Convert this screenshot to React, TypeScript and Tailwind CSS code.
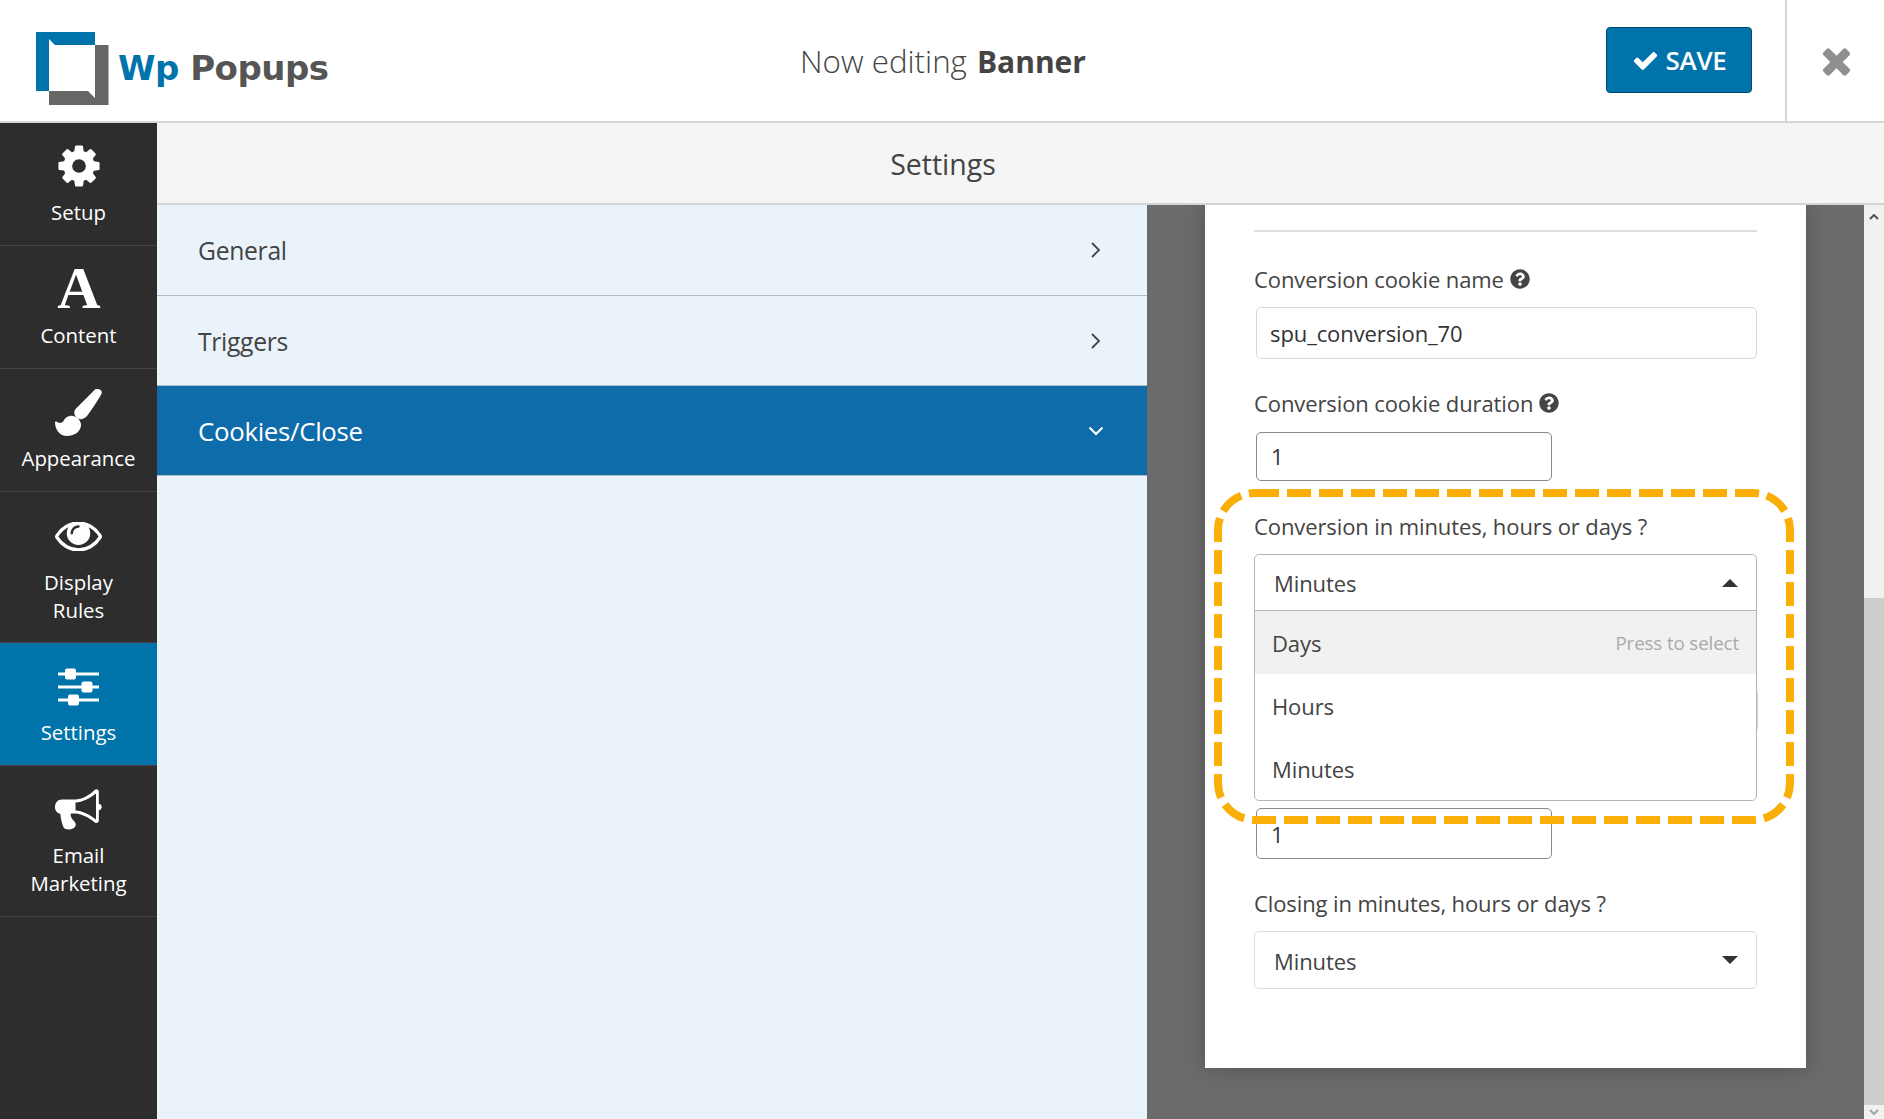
import React from "react";
import { FaQuestionCircle } from "react-icons/fa";

const Gear = () => (
  <svg width="48" height="48" viewBox="0 0 1792 1792" fill="#fff" className="-translate-y-[1px]">
    <path d="M1152 896q0-106-75-181t-181-75-181 75-75 181 75 181 181 75 181-75 75-181zm512-109v222q0 12-8 23t-20 13l-185 28q-19 54-39 91 35 50 107 138 10 12 10 25t-9 23q-27 37-99 108t-94 71q-12 0-26-9l-138-108q-44 23-91 38-16 136-29 186-7 28-36 28h-222q-14 0-24.500-8.500t-11.500-21.500l-28-184q-49-16-90-37l-141 107q-10 9-25 9-14 0-25-11-126-114-165-168-7-10-7-23 0-12 8-23 15-21 51-66.500t54-70.500q-27-50-41-99l-183-27q-13-2-21-12.500t-8-23.500v-222q0-12 8-23t19-13l186-28q14-46 39-92-40-57-107-138-10-12-10-24 0-10 9-23 26-36 98.500-107.500t94.500-71.500q13 0 26 10l138 107q44-23 91-38 16-136 29-186 7-28 36-28h222q14 0 24.500 8.500t11.500 21.500l28 184q49 16 90 37l142-107q9-9 24-9 13 0 25 10 129 119 165 170 7 8 7 22 0 12-8 23-15 21-51 66.500t-54 70.500q26 50 41 98l183 28q13 2 21 12.500t8 23.500z" />
  </svg>
);

const Eye = () => (
  <svg width="47" height="29" viewBox="0 416 1792 1088" fill="#fff">
    <path d="M1664 960q-152-236-381-353 61 104 61 225 0 185-131.500 316.500t-316.500 131.500-316.500-131.500-131.500-316.500q0-121 61-225-229 117-381 353 133 205 333.500 326.500t434.500 121.500 434.500-121.500 333.500-326.500zm-720-384q0-20-14-34t-34-14q-125 0-214.500 89.500t-89.500 214.500q0 20 14 34t34 14 34-14 14-34q0-86 61-147t147-61q20 0 34-14t14-34zm848 384q0 34-20 69-140 230-376.500 368.500t-499.500 138.500-499.500-139-376.500-368q-20-35-20-69t20-69q140-229 376.500-368t499.500-139 499.500 139 376.500 368q20 35 20 69z" />
  </svg>
);

const Check = () => (
  <svg width="27" height="27" viewBox="0 0 1792 1792" fill="#fff">
    <path d="M1671 566q0 40-28 68l-724 724-136 136q-28 28-68 28t-68-28l-136-136-362-362q-28-28-28-68t28-68l136-136q28-28 68-28t68 28l294 295 656-657q28-28 68-28t68 28l136 136q28 28 28 68z" />
  </svg>
);

const Times = () => (
  <svg width="41" height="41" viewBox="0 0 1792 1792" fill="#8f8f8f" className="translate-x-[1px]">
    <path d="M1490 1322q0 40-28 68l-136 136q-28 28-68 28t-68-28l-294-294-294 294q-28 28-68 28t-68-28l-136-136q-28-28-28-68t28-68l294-294-294-294q-28-28-28-68t28-68l136-136q28-28 68-28t68 28l294 294 294-294q28-28 68-28t68 28l136 136q28 28 28 68t-28 68l-294 294 294 294q28 28 28 68z" />
  </svg>
);

const LetterA = () => (
  <svg width="48" height="41" viewBox="0 0 48 41" fill="#fff" className="overflow-visible -translate-y-[1px]">
    <text
      x="24"
      y="40"
      textAnchor="middle"
      fontSize="60"
      fontWeight="700"
      fontFamily="'Liberation Serif', serif"
    >
      A
    </text>
  </svg>
);

const Brush = () => (
  <svg width="47" height="47" viewBox="0 0 47 47" fill="#fff">
    <path d="M40 .5C42-.5 47 0 46.800 4 46.500 6 34 25 32 27c-3 3.500-8 4.500-11 1-2.500-3-2-6 0-8.500z" />
    <path d="M15 27c5-1 10 3 11 8 .5 7-6 12-14 12C5 47 0 41 0 33c1-1 2 0 3 .5 2 1 4 .5 5.500-1.500C10 29 12 27.500 15 27z" />
  </svg>
);

const Sliders = () => (
  <svg width="41" height="38" viewBox="0 0 41 38" fill="#fff">
    <rect x="0" y="4.500" width="41" height="3" />
    <rect x="0" y="17.500" width="41" height="3" />
    <rect x="0" y="30.500" width="41" height="3" />
    <rect x="7" y="0.500" width="11" height="11" rx="2" />
    <rect x="23.500" y="13.500" width="11" height="11" rx="2" />
    <rect x="10" y="26.500" width="11" height="11" rx="2" />
  </svg>
);

const Megaphone = () => (
  <svg width="47" height="41" viewBox="0 0 47 41" fill="#fff">
    <path
      fillRule="evenodd"
      d="M41.500.200c1.200 0 2.300 1 2.300 2.300v12.300c1.700.3 2.900 1.600 2.900 3.200s-1.200 3-2.900 3.300v10.500c0 1.200-1 2.200-2.300 2.200-.6 0-1.100-.2-1.600-.6C34 29 28 25 20 24.500l-3.500-.1-.5.1c-.6 1-.3 2.300 0 3.200.5 1.500 1.700 3 3 4.300 1.500 1.500 2.200 3.500 1.500 5-.7 1.800-3 3.300-6 3.500-2.700.2-5.200-.5-6-2.200-1.500-3.300-2.700-8-3.200-13.500C2 24.300 0 21.500 0 18c0-4 2.800-7.500 7-7.500h13c7 0 14-4 20-9.700.4-.4 1-.6 1.500-.6zM20.500 13.500v8c7 .3 14 4 20.500 9V4.500c-6.500 5-13.500 8.700-20.500 9z"
    />
  </svg>
);

const Logo = () => (
  <svg width="74" height="75" viewBox="36 31 74 75" className="shrink-0">
    <path fill="#0073aa" d="M36 32h59v13H55l-6-6v52H36z" />
    <path fill="#666" d="M95 45h13.500v60H49V91h39l7 7z" />
  </svg>
);

const Chevron = ({ open = false }: { open?: boolean }) =>
  open ? (
    <svg width="16" height="16" viewBox="0 0 16 16" fill="none" stroke="#fff" strokeWidth="2">
      <path d="M1.500 4.500l6.500 6.500 6.500-6.500" />
    </svg>
  ) : (
    <svg width="16" height="16" viewBox="0 0 16 16" fill="none" stroke="#444" strokeWidth="1.800">
      <path d="M4 1l7 7-7 7" />
    </svg>
  );

const Caret = ({ up = false }: { up?: boolean }) => (
  <svg width="16" height="8" viewBox="0 0 16 8" fill="#333" className="shrink-0">
    {up ? <path d="M8 0l8 8H0z" /> : <path d="M0 0h16l-8 8z" />}
  </svg>
);

type Item = { label: string[]; icon: React.ReactNode; h: string; active?: boolean };

const items: Item[] = [
  { label: ["Setup"], icon: <Gear />, h: "h-[123px] pt-[20px]" },
  { label: ["Content"], icon: <LetterA />, h: "h-[123px] pt-[20px]" },
  { label: ["Appearance"], icon: <Brush />, h: "h-[123px] pt-[20px]" },
  { label: ["Display", "Rules"], icon: <Eye />, h: "h-[151px] pt-[21px]" },
  { label: ["Settings"], icon: <Sliders />, h: "h-[123px] pt-[20px]", active: true },
  { label: ["Email", "Marketing"], icon: <Megaphone />, h: "h-[151px] pt-[20px]" },
];

const SideItem = ({ item }: { item: Item }) => (
  <div
    className={`${item.h} flex flex-col items-center border-b border-[#444444] ${item.active ? "bg-[#0073aa]" : ""}`}
  >
    <div className="h-[47px] flex items-center justify-center">{item.icon}</div>
    <div className="mt-[8px] text-center text-white text-[20.400px] leading-[28px]">
      {item.label.map((l) => (
        <div key={l}>{l}</div>
      ))}
    </div>
  </div>
);

const MenuRow = ({ label, h, open = false }: { label: string; h: string; open?: boolean }) => (
  <div
    className={`${h} flex items-center justify-between pl-[41px] pr-[43px] border-b border-[#b1bccb] ${
      open ? "bg-[#0f6cab] text-white text-[25.800px] tracking-[-0.300px]" : "text-[#444444] text-[24.700px] tracking-[-0.300px]"
    }`}
  >
    <span className="pt-[2px]">{label}</span>
    <Chevron open={open} />
  </div>
);

const Label = ({ text, help = false, className = "" }: { text: string; help?: boolean; className?: string }) => (
  <div className={`flex items-center gap-[6px] h-[30px] pb-[2px] text-[22px] tracking-[-0.100px] text-[#444444] ${className}`}>
    <span>{text}</span>
    {help && <FaQuestionCircle size={20} color="#444" />}
  </div>
);

export default function App() {
  return (
    <div className="w-[1884px] h-[1119px] overflow-hidden flex flex-col bg-white font-['Open_Sans',sans-serif]">
      <header className="h-[123px] shrink-0 border-b-2 border-[#d4d4d4] flex items-stretch">
        <div className="w-[500px] flex items-center pl-[36px] pt-[16px] gap-[8px]">
          <Logo />
          <span className="mb-[2px] font-['DejaVu_Sans',sans-serif] font-bold text-[34px] leading-none tracking-[-0.5px] text-[#555555] whitespace-nowrap">
            <span className="text-[#0073aa]">Wp</span> Popups
          </span>
        </div>
        <div className="flex-1 flex items-center justify-center pt-[2px] pl-[2px] text-[#444444] whitespace-nowrap">
          <span className="font-light text-[31.300px]">Now editing</span>
          <span className="font-bold text-[30px] ml-[10px]">Banner</span>
        </div>
        <div className="w-[500px] flex items-stretch justify-end">
          <div className="flex items-center pb-[1px] pr-[33px]">
            <button className="w-[146px] h-[66px] rounded-[4px] border border-[#00496d] bg-[#0073aa] text-white flex items-center justify-center gap-[7px] text-[26px] font-semibold tracking-[-0.300px]">
              <Check />
              <span>SAVE</span>
            </button>
          </div>
          <div className="w-[99px] h-[121px] border-l-2 border-[#d4d4d4] flex items-center justify-center">
            <Times />
          </div>
        </div>
      </header>

      <div className="flex-1 min-h-0 flex">
        <aside className="w-[157px] shrink-0 bg-[#2d2d2d]">
          {items.map((it) => (
            <SideItem key={it.label[0]} item={it} />
          ))}
        </aside>

        <main className="flex-1 min-w-0 flex flex-col">
          <div className="h-[82px] shrink-0 bg-[#f5f5f5] border-b-2 border-[#d4d4d4] flex items-center justify-center pr-[155px] pt-[2px] text-[28.500px] text-[#444444]">
            Settings
          </div>
          <div className="flex-1 min-h-0 flex">
            <nav className="w-[990px] shrink-0 bg-[#ebf3fa]">
              <MenuRow label="General" h="h-[91px]" />
              <MenuRow label="Triggers" h="h-[90px]" />
              <MenuRow label="Cookies/Close" h="h-[90px]" open />
            </nav>

            <div className="flex-1 min-w-0 overflow-hidden bg-[#6b6b6b] pl-[58px]">
              <section className="relative w-[601px] h-[863px] bg-white shadow-[0_0_20px_rgba(0,0,0,0.22)] px-[49px]">
                <div className="pt-[25px] border-b-2 border-[#dedede]" />
                <Label text="Conversion cookie name" help className="mt-[33px]" />
                <div className="mt-[12px] ml-[2px] h-[52px] border border-[#d8d8d8] rounded-[5px] pl-[13px] pt-[1px] flex items-center text-[22px] tracking-[-0.100px] text-[#333333]">
                  spu_conversion_70
                </div>
                <Label text="Conversion cookie duration" help className="mt-[30px]" />
                <div className="mt-[13px] ml-[2px] w-[296px] h-[49px] border border-[#8a8a8a] rounded-[5px] pl-[14px] flex items-center text-[22px] text-[#333333]">
                  1
                </div>
                <Label text="Conversion in minutes, hours or days ?" className="mt-[31px]" />
                <div className="relative mt-[12px]">
                  <div className="h-[57px] border border-[#b5b5b5] rounded-t-[5px] pl-[19px] pr-[18px] flex items-center justify-between text-[22px] tracking-[-0.100px] text-[#444444]">
                    <span className="pt-[1px]">Minutes</span>
                    <Caret up />
                  </div>
                  <div className="absolute left-0 right-0 top-[56px] h-[191px] z-10 bg-white border border-[#b5b5b5] rounded-b-[5px] text-[22px] tracking-[-0.100px] text-[#444444]">
                    <div className="h-[63px] bg-[#f1f1f1] pl-[17px] pr-[17px] flex items-center justify-between">
                      <span className="pt-[1px]">Days</span>
                      <span className="pt-[2px] text-[18.700px] text-[#a9a9a9]">Press to select</span>
                    </div>
                    <div className="h-[63px] pl-[17px] pt-[1px] flex items-center">Hours</div>
                    <div className="h-[63px] pl-[17px] pt-[1px] flex items-center">Minutes</div>
                  </div>
                </div>
                <div className="mt-[77px] ml-[2px] -mr-[1px] h-[45px] border border-[#d8d8d8] rounded-[5px]" />
                <div className="mt-[75px] ml-[2px] w-[296px] h-[51px] border border-[#8a8a8a] rounded-[5px] pl-[14px] pt-[2px] flex items-center text-[22px] text-[#333333]">
                  1
                </div>
                <Label text="Closing in minutes, hours or days ?" className="mt-[30px]" />
                <div className="mt-[12px] h-[58px] border border-[#dcdcdc] rounded-[5px] pl-[19px] pr-[18px] flex items-center justify-between text-[22px] tracking-[-0.100px] text-[#444444]">
                  <span className="pt-[3px]">Minutes</span>
                  <Caret />
                </div>
                <svg className="absolute left-[9px] top-[284px] z-20 pointer-events-none" width="580" height="335" fill="none">
                  <rect
                    x="4"
                    y="4"
                    width="572"
                    height="327"
                    rx="37"
                    stroke="#f9ae08"
                    strokeWidth="8"
                    strokeDasharray="24 8"
                  />
                </svg>
              </section>
            </div>

            <div className="w-[20px] shrink-0 flex flex-col bg-[#f1f1f1]">
              <div className="h-[24px] flex items-center justify-center">
                <svg width="10" height="6" viewBox="0 0 10 6" fill="none" stroke="#505050" strokeWidth="2">
                  <path d="M1 5l4-4 4 4" />
                </svg>
              </div>
              <div className="h-[369px]" />
              <div className="h-[507px] bg-[#cdcdcd]" />
              <div className="flex-1 flex items-center justify-center">
                <svg width="10" height="6" viewBox="0 0 10 6" fill="none" stroke="#a3a3a3" strokeWidth="2">
                  <path d="M1 1l4 4 4-4" />
                </svg>
              </div>
            </div>
          </div>
        </main>
      </div>
    </div>
  );
}
